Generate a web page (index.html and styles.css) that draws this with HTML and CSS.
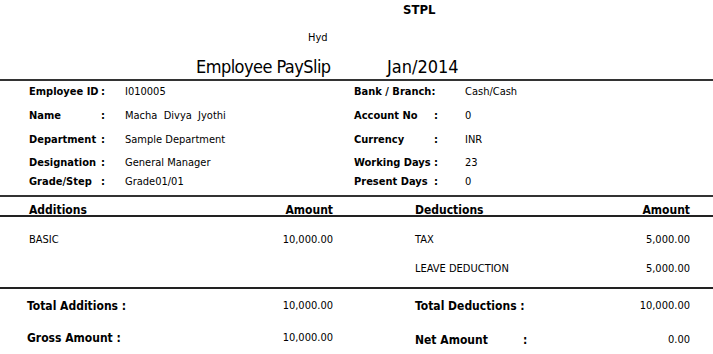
FILE: index.html
```html
<!DOCTYPE html>
<html>
<head>
<meta charset="utf-8">
<link rel="stylesheet" href="styles.css">
</head>
<body>
<div class="slip">
  <div class="company">STPL</div>
  <div class="city">Hyd</div>
  <div class="title"><span class="t-name">Employee PaySlip</span><span class="t-month">Jan/2014</span></div>

  <div class="info">
    <div class="info-col left">
      <div class="row r1"><span class="lbl">Employee ID</span><span class="colon">:</span><span class="val">I010005</span></div>
      <div class="row r2"><span class="lbl">Name</span><span class="colon">:</span><span class="val">Macha&nbsp; Divya&nbsp; Jyothi</span></div>
      <div class="row r3"><span class="lbl">Department</span><span class="colon">:</span><span class="val">Sample Department</span></div>
      <div class="row r4"><span class="lbl">Designation</span><span class="colon">:</span><span class="val">General Manager</span></div>
      <div class="row r5"><span class="lbl">Grade/Step</span><span class="colon">:</span><span class="val">Grade01/01</span></div>
    </div>
    <div class="info-col right">
      <div class="row r1"><span class="lbl">Bank / Branch:</span><span class="colon"></span><span class="val">Cash/Cash</span></div>
      <div class="row r2"><span class="lbl">Account No</span><span class="colon">:</span><span class="val">0</span></div>
      <div class="row r3"><span class="lbl">Currency</span><span class="colon">:</span><span class="val">INR</span></div>
      <div class="row r4"><span class="lbl">Working Days</span><span class="colon">:</span><span class="val">23</span></div>
      <div class="row r5"><span class="lbl">Present Days</span><span class="colon">:</span><span class="val">0</span></div>
    </div>
  </div>

  <div class="pay-head">
    <div class="pcol pleft"><span>Additions</span><span>Amount</span></div>
    <div class="pcol pright"><span>Deductions</span><span>Amount</span></div>
  </div>

  <div class="pay-body">
    <div class="pcol pleft items">
      <div class="item i1"><span>BASIC</span><span>10,000.00</span></div>
    </div>
    <div class="pcol pright items">
      <div class="item i1"><span>TAX</span><span>5,000.00</span></div>
      <div class="item i2"><span>LEAVE DEDUCTION</span><span>5,000.00</span></div>
    </div>
  </div>

  <div class="totals">
    <div class="pcol tleft">
      <div class="trow t1"><span class="tl">Total Additions :</span><span>10,000.00</span></div>
      <div class="trow t2"><span class="tl">Gross Amount :</span><span>10,000.00</span></div>
    </div>
    <div class="pcol pright">
      <div class="trow t1"><span class="tl">Total Deductions :</span><span>10,000.00</span></div>
      <div class="trow t2 net"><span class="tl"><span class="net-l">Net Amount</span>:</span><span>0.00</span></div>
    </div>
  </div>
</div>
</body>
</html>
```
FILE: styles.css
```css
html, body {
  margin: 0;
  padding: 0;
  background: #fff;
}
body {
  font-family: "DejaVu Sans Condensed", "DejaVu Sans", sans-serif;
  font-size: 11px;
  color: #000;
  width: 713px;
  height: 354px;
  overflow: hidden;
}
.slip {
  width: 713px;
}
.company {
  font-weight: bold;
  font-size: 13px;
  padding-left: 403px;
  height: 20px;
  line-height: 20px;
}
.city {
  padding-left: 308px;
  margin-top: 10px;
  height: 16px;
  line-height: 16px;
}
.title {
  display: flex;
  font-size: 18px;
  margin-top: 8px;
  height: 25px;
  line-height: 25px;
  padding-left: 196px;
  white-space: nowrap;
}
.t-name { width: 191px; flex: none; letter-spacing: -0.55px; }

.info {
  display: flex;
  border-top: 2px solid #333;
  border-bottom: 2px solid #333;
  height: 114px;
  white-space: nowrap;
}
.info-col {
  display: flex;
  flex-direction: column;
}
.info-col.left { padding-left: 29px; width: 354px; box-sizing: border-box; }
.row {
  display: flex;
  align-items: center;
  height: 20px;
}
.row .lbl { font-weight: bold; flex: none; }
.row .colon { font-weight: bold; flex: none; }
.info-col.left .lbl { width: 72px; }
.info-col.left .colon { width: 24px; }
.info-col.right .lbl { width: 80px; }
.info-col.right .colon { width: 31px; }
.r2 { margin-top: 4px; }
.r3 { margin-top: 4px; }
.r4 { margin-top: 3px; }
.r5 { margin-top: -1px; }

.pay-head {
  display: flex;
  border-bottom: 2px solid #222;
  padding-top: 8px;
  height: 10px;
  line-height: 10px;
  font-weight: bold;
}
.pcol {
  display: flex;
  justify-content: space-between;
}
.pleft { margin-left: 29px; width: 304px; }
.pright { margin-left: 82px; width: 275px; }
.pay-head .pcol { font-size: 12px; }

.pay-body {
  display: flex;
  height: 70px;
  border-bottom: 2px solid #222;
}
.items {
  flex-direction: column;
  justify-content: flex-start;
}
.item {
  display: flex;
  justify-content: space-between;
  height: 29px;
  line-height: 29px;
}
.item.i1 { margin-top: 8px; }

.totals {
  display: flex;
  margin-top: 1px;
}
.tleft { margin-left: 27px; width: 306px; flex-direction: column; }
.totals .pright { flex-direction: column; }
.trow {
  display: flex;
  justify-content: space-between;
  height: 32px;
  line-height: 32px;
}
.tl { font-weight: bold; font-size: 12px; }
.net-l { display: inline-block; width: 108px; }
.net { line-height: 36px; }
```
